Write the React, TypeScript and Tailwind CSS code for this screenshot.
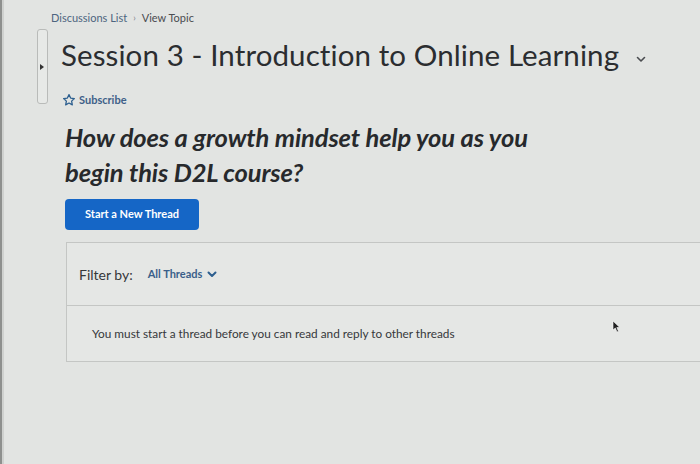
import React from "react";

export default function App() {
  return (
    <div
      className="w-[700px] h-[464px] overflow-hidden bg-[#e2e4e2] flex"
      style={{ fontFamily: "Lato, 'Open Sans', sans-serif" }}
    >
      <div className="w-[2px] h-full bg-[#8e908e]" />
      <div className="w-[2px] h-full bg-[#cfd1cf]" />
      <div className="flex-1 flex flex-col relative">
        {/* breadcrumb */}
        <div className="pl-[47px] pt-[6px] h-[28px] flex items-center text-[11px] leading-none">
          <span className="text-[#4d6580]">Discussions List</span>
          <span className="text-[#808288] mx-[6px] text-[9px]">›</span>
          <span className="text-[#4a4c50]">View Topic</span>
        </div>
        {/* title row */}
        <div className="flex items-start">
          <div className="ml-[33px] mt-[1px] w-[11px] h-[75px] border border-[#b9bbb9] rounded-[3px] bg-[#e7e9e7] relative">
            <div className="absolute left-[2px] top-[34px] w-0 h-0 border-y-[3px] border-y-transparent border-l-[4px] border-l-[#333]" />
          </div>
          <div className="ml-[13px] flex flex-col">
            <div className="flex items-center h-[54px]">
              <h1 className="text-[29.5px] text-[#2b2d30] leading-none tracking-[0.1px]">
                Session 3 - Introduction to Online Learning
              </h1>
              <svg className="ml-[17px] mt-[8px]" width="10" height="7" viewBox="0 0 10 7">
                <path d="M1.5 1.5 L5 5 L8.5 1.5" fill="none" stroke="#4a4c50" strokeWidth="1.6" strokeLinecap="round" strokeLinejoin="round" />
              </svg>
            </div>
            <div className="flex items-center mt-[8px] h-[20px]">
              <svg width="14" height="14" viewBox="0 0 24 24" className="ml-[1px]">
                <path
                  d="M12 2.8l2.8 5.9 6.4.8-4.7 4.4 1.2 6.4L12 17.2l-5.7 3.1 1.2-6.4-4.7-4.4 6.4-.8z"
                  fill="none"
                  stroke="#2d5f8f"
                  strokeWidth="2.2"
                  strokeLinejoin="round"
                />
              </svg>
              <span className="ml-[3px] text-[11px] font-bold text-[#3e6088]">Subscribe</span>
            </div>
          </div>
        </div>
        {/* question */}
        <div className="pl-[61px] mt-[10px]">
          <p className="text-[25.5px] font-bold italic text-[#27292c] leading-[35px] tracking-[-0.1px]">
            How does a growth mindset help you as you
            <br />
            begin this D2L course?
          </p>
        </div>
        {/* button */}
        <div className="pl-[61px] mt-[9px]">
          <button className="w-[134px] h-[31px] rounded-[4px] bg-[#1566c6] text-white text-[11px] font-bold">
            Start a New Thread
          </button>
        </div>
        {/* panel */}
        <div className="ml-[62px] mt-[12px] border border-[#c4c6c4] border-r-0 bg-[#e5e7e5]">
          <div className="h-[63px] flex items-center pl-[12px] border-b border-[#c4c6c4]">
            <span className="text-[14px] text-[#35373a]">Filter by:</span>
            <span className="ml-[15px] text-[11px] font-bold text-[#3b5f8a]">All Threads</span>
            <svg className="ml-[5px]" width="10" height="7" viewBox="0 0 10 7">
              <path d="M1.5 1.5 L5 5 L8.5 1.5" fill="none" stroke="#2d5f8f" strokeWidth="2" strokeLinecap="round" strokeLinejoin="round" />
            </svg>
          </div>
          <div className="ml-[3px] h-[55px] flex items-center pl-[22px] relative">
            <span className="text-[11.8px] text-[#36383b]">
              You must start a thread before you can read and reply to other threads
            </span>
            <svg className="absolute left-[542px] top-[14px]" width="9" height="13" viewBox="0 0 9 13">
              <path d="M1 1 L1 10 L3.3 8 L5 12 L6.5 11.3 L4.8 7.5 L7.8 7.5 Z" fill="#222" stroke="#fff" strokeWidth="0.6" />
            </svg>
          </div>
        </div>
      </div>
    </div>
  );
}
